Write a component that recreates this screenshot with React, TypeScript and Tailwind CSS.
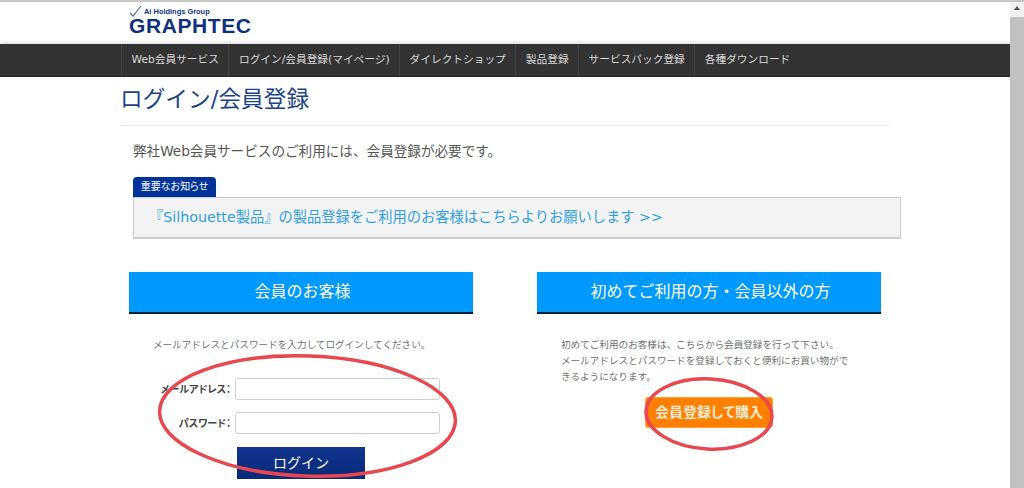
const NAV = ["Web会員サービス", "ログイン/会員登録(マイページ)", "ダイレクトショップ", "製品登録", "サービスパック登録", "各種ダウンロード"];
const FONT = "font-['DejaVu_Sans','Noto_Sans_CJK_JP',sans-serif]";

function Logo() {
  return (
    <div className="flex flex-col pt-[4px] pl-[9px]">
      <div className="flex items-center h-[11px]">
        <svg width="14" height="12" viewBox="0 0 14 12" className="-mt-[1px]">
          <path d="M1 8 L4 11 L12 1" fill="none" stroke="#5a6a85" strokeWidth="1.2" />
        </svg>
        <span className="font-['Liberation_Sans',sans-serif] font-bold text-[8px] leading-[11px] text-[#12357f] ml-[1px] whitespace-nowrap scale-x-[0.93] origin-left">Ai Holdings Group</span>
      </div>
      <span className="font-['Liberation_Sans',sans-serif] font-bold text-[21px] leading-[20px] text-[#0f2f7f] tracking-[0.6px] -mt-[1px] whitespace-nowrap">GRAPHTEC</span>
    </div>
  );
}

function SectionHead({ children }: { children: string }) {
  return (
    <h2 className="h-[42px] pl-[3px] bg-[#0099ff] border-b-2 border-[#10203a] flex items-center justify-center text-white text-[16px]">
      {children}
    </h2>
  );
}

function Field({ label }: { label: string }) {
  return (
    <div className="flex items-center h-[22px]">
      <span className="w-[102px] text-right text-[10px] font-bold text-[#444] [font-feature-settings:'palt']">{label}：</span>
      <input className="ml-[4px] w-[205px] h-[22px] bg-white border border-[#cfcfcf] rounded-[3px]" />
    </div>
  );
}

export default function App() {
  return (
    <div className={`${FONT} flex w-[1024px] h-[488px] overflow-hidden bg-white`}>
      <main className="relative w-[1010px] shrink-0 border-t-2 border-[#c8c8c8]">
        <header className="h-[42px] pl-[120px]">
          <Logo />
        </header>
        <nav className="h-[33px] bg-[#333333] border-b border-[#222] pl-[121px] flex shadow-[0_-2px_3px_rgba(0,0,0,0.12)]">
          {NAV.map((item) => (
            <a key={item} className="flex items-center border-l border-[#444] px-[9.5px] text-[10.7px] text-[#d8d8d8] whitespace-nowrap">
              {item}
            </a>
          ))}
        </nav>

        <div className="pl-[121px] w-[889px]">
          <h1 className="h-[49px] border-b border-[#e8e8e8] pt-[7px] -indent-[1px] text-[22.7px] leading-[30px] text-[#1d4488]">ログイン/会員登録</h1>

          <p className="mt-[15px] ml-[12px] text-[13.6px] leading-[20px] text-[#555]">弊社Web会員サービスのご利用には、会員登録が必要です。</p>

          <div className="mt-[16px] ml-[12px]">
            <span className="block w-[83px] h-[20px] bg-[#003399] rounded-t-[4px] text-white text-[10px] leading-[19px] text-center [font-feature-settings:'palt']">重要なお知らせ</span>
            <div className="w-[768px] h-[42px] bg-[#f3f3f3] border border-[#cccccc] border-b-2 flex items-center pl-[15px] text-[14.25px] text-[#2f9fe3]">
              『Silhouette製品』の製品登録をご利用のお客様はこちらよりお願いします &gt;&gt;
            </div>
          </div>

          <div className="mt-[33px] ml-[8px] flex gap-[64px]">
            <section className="w-[344px]">
              <SectionHead>会員のお客様</SectionHead>
              <p className="mt-[23px] ml-[24px] text-[9.6px] leading-[16px] text-[#707070]">メールアドレスとパスワードを入力してログインしてください。</p>
              <div className="mt-[25px] flex flex-col gap-[12px]">
                <Field label="メールアドレス" />
                <Field label="パスワード" />
              </div>
              <button className="block mt-[13px] ml-[108px] w-[128px] h-[32px] bg-gradient-to-b from-[#11348f] to-[#0a2a78] text-white text-[14px]">ログイン</button>
            </section>

            <section className="w-[344px]">
              <SectionHead>初めてご利用の方・会員以外の方</SectionHead>
              <p className="mt-[23px] ml-[24px] w-[290px] text-[9.6px] leading-[16px] text-[#707070]">
                初めてご利用のお客様は、こちらから会員登録を行って下さい。
                <br />
                メールアドレスとパスワードを登録しておくと便利にお買い物ができるようになります。
              </p>
              <button className="block mt-[12px] ml-[108px] w-[128px] h-[31px] rounded-[3px] bg-[#ff7f00] border border-[#ffa030] text-[#ffe9cf] font-bold text-[14px] [font-feature-settings:'palt']">会員登録して購入</button>
            </section>
          </div>
        </div>

        <svg className="absolute left-0 top-[-2px] pointer-events-none" width="1010" height="488" viewBox="0 0 1010 488" fill="none" stroke="#e8474f" strokeWidth="3.5">
          <ellipse cx="307.5" cy="416" rx="148" ry="60" transform="rotate(2 307.5 416)" />
          <ellipse cx="709" cy="414" rx="63" ry="35" transform="rotate(3 709 414)" />
        </svg>
      </main>

      <aside className="relative w-[14px] shrink-0 bg-[#f1f1f1] flex flex-col border-t-2 border-[#c8c8c8]">
        <svg width="14" height="15" viewBox="0 0 14 15" className="shrink-0">
          <path d="M7 4 L10 8 L4 8 Z" fill="#505050" />
        </svg>
        <div className="flex-1 bg-[#c1c1c1]" />
      </aside>
    </div>
  );
}
